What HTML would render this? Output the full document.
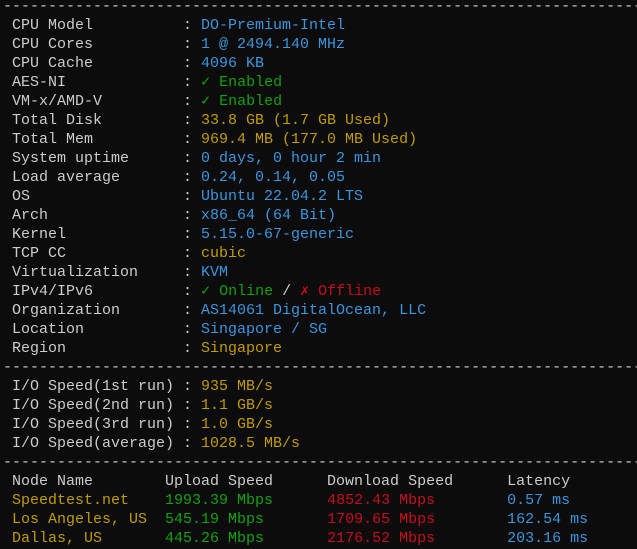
<!DOCTYPE html>
<html><head><meta charset="utf-8"><style>
html,body{margin:0;padding:0;background:#0c0c0c;width:637px;height:549px;overflow:hidden}
pre{margin:0;position:absolute;left:3px;top:-3px;width:634px;padding-left:9px;box-sizing:border-box;overflow:hidden;font-family:"Liberation Mono","DejaVu Sans Mono",monospace;font-size:15px;line-height:19px;color:#cccccc;white-space:pre}
.d{margin-left:-9px;display:inline-block}
.b{color:#3a96dd}.g{color:#13a10e}.y{color:#c19c00}.r{color:#c50f1f}
</style></head><body><pre><span class="d">-----------------------------------------------------------------------</span>
CPU Model          : <span class="b">DO-Premium-Intel</span>
CPU Cores          : <span class="b">1 @ 2494.140 MHz</span>
CPU Cache          : <span class="b">4096 KB</span>
AES-NI             : <span class="g">✓ Enabled</span>
VM-x/AMD-V         : <span class="g">✓ Enabled</span>
Total Disk         : <span class="y">33.8 GB (1.7 GB Used)</span>
Total Mem          : <span class="y">969.4 MB (177.0 MB Used)</span>
System uptime      : <span class="b">0 days, 0 hour 2 min</span>
Load average       : <span class="b">0.24, 0.14, 0.05</span>
OS                 : <span class="b">Ubuntu 22.04.2 LTS</span>
Arch               : <span class="b">x86_64 (64 Bit)</span>
Kernel             : <span class="b">5.15.0-67-generic</span>
TCP CC             : <span class="y">cubic</span>
Virtualization     : <span class="b">KVM</span>
IPv4/IPv6          : <span class="g">✓ Online</span> / <span class="r">✗ Offline</span>
Organization       : <span class="b">AS14061 DigitalOcean, LLC</span>
Location           : <span class="b">Singapore / SG</span>
Region             : <span class="y">Singapore</span>
<span class="d">-----------------------------------------------------------------------</span>
I/O Speed(1st run) : <span class="y">935 MB/s</span>
I/O Speed(2nd run) : <span class="y">1.1 GB/s</span>
I/O Speed(3rd run) : <span class="y">1.0 GB/s</span>
I/O Speed(average) : <span class="y">1028.5 MB/s</span>
<span class="d">-----------------------------------------------------------------------</span>
Node Name        Upload Speed      Download Speed      Latency
<span class="y">Speedtest.net    </span><span class="g">1993.39 Mbps      </span><span class="r">4852.43 Mbps        </span><span class="b">0.57 ms</span>
<span class="y">Los Angeles, US  </span><span class="g">545.19 Mbps       </span><span class="r">1709.65 Mbps        </span><span class="b">162.54 ms</span>
<span class="y">Dallas, US       </span><span class="g">445.26 Mbps       </span><span class="r">2176.52 Mbps        </span><span class="b">203.16 ms</span>
</pre></body></html>
